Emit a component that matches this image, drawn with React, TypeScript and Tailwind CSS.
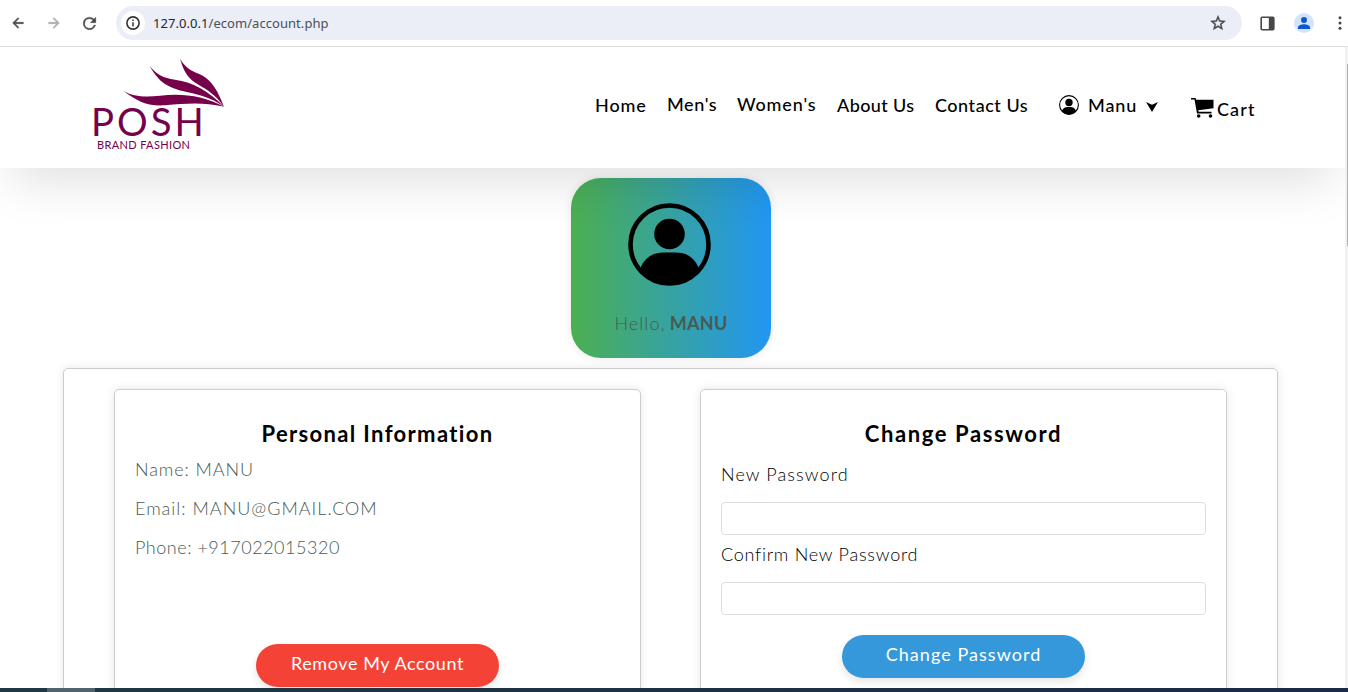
const navItems = [
  { label: "Home", box: "w-[72px] tracking-[0.9px] pt-px" },
  { label: "Men's", box: "w-[70px] tracking-[0.6px]" },
  { label: "Women's", box: "w-[100px] tracking-[0.85px]" },
  { label: "About Us", box: "w-[98px] tracking-[0.4px] pt-px" },
  { label: "Contact Us", box: "w-[124px] tracking-[0.53px] pt-px" },
];

const details = [
  { text: "Name: MANU", spacing: "tracking-[0.9px]" },
  { text: "Email: MANU@GMAIL.COM", spacing: "tracking-[1px]" },
  { text: "Phone: +917022015320", spacing: "tracking-[0.52px]" },
];

function UserIcon({ className }: { className: string }) {
  return (
    <svg viewBox="0 0 83 83" className={className}>
      <circle cx="41.5" cy="41.5" r="39" fill="none" stroke="#000" strokeWidth="4.6" />
      <circle cx="41.5" cy="31" r="15.3" />
      <path d="M12 66C17 53 27 49.500 35 49.500h13C57 49.500 66 53 71 66A38 38 0 0 1 12 66Z" />
    </svg>
  );
}

function BrowserBar() {
  return (
    <div className="flex h-[47px] shrink-0 items-center border-b border-[#dedede] bg-white text-[#474747]">
      <svg viewBox="0 0 24 24" className="ml-[10px] h-4 w-4 fill-current stroke-current stroke-[0.8]">
        <path d="M20 11H7.800l5.600-5.600L12 4l-8 8 8 8 1.400-1.400L7.800 13H20z" />
      </svg>
      <svg viewBox="0 0 24 24" className="ml-5 h-4 w-4 fill-[#aaa] stroke-[#aaa] stroke-[0.8]">
        <path d="m12 4-1.400 1.400L16.200 11H4v2h12.200l-5.600 5.600L12 20l8-8z" />
      </svg>
      <svg viewBox="0 0 24 24" className="ml-[18px] h-[19px] w-[19px] fill-current stroke-current stroke-[0.4]">
        <path d="M17.650 6.350A7.960 7.960 0 0 0 12 4a8 8 0 1 0 7.730 10h-2.080A6 6 0 1 1 12 6c1.660 0 3.140.69 4.220 1.780L13 11h7V4z" />
      </svg>
      <div className="ml-[17px] flex h-[34px] w-[1126px] items-center rounded-full bg-[#ebeef7] pl-[5px] pr-[15px]">
        <span className="flex h-6 w-6 items-center justify-center rounded-full bg-white">
          <svg viewBox="0 0 14 14" className="h-[14px] w-[14px]">
            <circle cx="7" cy="7" r="6.100" fill="none" stroke="#333" strokeWidth="1.600" />
            <path d="M6.250 6.200h1.500v4.200h-1.500zM6.250 3.600h1.500v1.500h-1.500z" fill="#333" />
          </svg>
        </span>
        <span className="ml-2 flex-1 whitespace-nowrap pt-[2px] font-['Noto_Sans',sans-serif] text-[13px] tracking-[0.05px] text-[#4b4e54]">
          <span className="text-[#24262b]">127.0.0.1</span>/ecom/account.php
        </span>
        <svg viewBox="0 0 24 24" className="h-[18px] w-[18px] fill-current stroke-current stroke-[0.5]">
          <path d="m22 9.240-7.190-.62L12 2 9.190 8.630 2 9.240l5.460 4.730L5.820 21 12 17.270 18.180 21l-1.630-7.030zM12 15.400l-3.760 2.270 1-4.280-3.320-2.880 4.380-.38L12 6.100l1.710 4.040 4.380.38-3.320 2.880 1 4.280z" />
        </svg>
      </div>
      <svg viewBox="0 0 15 15" className="ml-[18px] h-[15px] w-[15px]">
        <rect x="1.200" y="1.200" width="12.600" height="12.600" rx="1" fill="none" stroke="#474747" strokeWidth="1.600" />
        <path d="M8.800 1h5v13h-5z" fill="#474747" />
      </svg>
      <span className="ml-[19px] flex h-5 w-5 items-center justify-center rounded-full bg-[#d3e3fd]">
        <svg viewBox="0 0 12 12" className="h-3 w-3 fill-[#0b57d0]">
          <circle cx="6" cy="3" r="3" />
          <path d="M0 12v-1.800C0 8.200 3.500 7.200 6 7.200s6 1 6 3V12z" />
        </svg>
      </span>
      <svg viewBox="0 0 4 14" className="ml-[24px] h-[14px] w-1 shrink-0 fill-current">
        <circle cx="2" cy="1.700" r="1.500" />
        <circle cx="2" cy="7" r="1.500" />
        <circle cx="2" cy="12.300" r="1.500" />
      </svg>
    </div>
  );
}

function Logo() {
  return (
    <svg viewBox="0 0 480 330" className="ml-20 mt-[3px] h-[110px] w-[160px] shrink-0 fill-[#75014b]">
      <path d="M129 122C160 140 195 142 240 137C310 129 370 138 432 170C370 157 325 160 255 166C195 169 170 150 129 122Z" />
      <path d="M209 48C230 74 250 84 285 89C340 97 385 122 432 170C392 142 360 135 320 126C255 112 235 92 209 48Z" />
      <path d="M300 26C316 54 335 62 356 71C390 86 410 112 432 170C405 133 385 122 352 102C322 84 310 60 300 26Z" />
      <text x="33" y="257" fontSize="115" textLength="338" className="font-['Lato',sans-serif]">POSH</text>
      <text x="51" y="298" fontSize="33" textLength="279" className="font-['Lato',sans-serif]">BRAND FASHION</text>
    </svg>
  );
}

function Header() {
  return (
    <header className="relative z-10 flex h-[121px] shrink-0 bg-white shadow-[0_25px_50px_-12px_rgba(0,0,0,0.125)]">
      <Logo />
      <nav className="ml-[355px] flex pt-[44px] text-[18px] font-medium leading-[26px] whitespace-nowrap">
        {navItems.map((item) => (
          <a key={item.label} className={`shrink-0 ${item.box}`}>{item.label}</a>
        ))}
        <a className="flex w-[132px] shrink-0 pt-px tracking-[0.9px]">
          <UserIcon className="mt-[3px] h-5 w-5" />
          <span className="ml-[9px] w-[58px]">Manu</span>
          <svg viewBox="0 0 12 10" className="mt-[10px] h-[10px] w-3">
            <path d="M0 0 6 2.800 12 0 6 10Z" />
          </svg>
        </a>
        <a className="flex pt-[5px] tracking-[1.1px]">
          <svg viewBox="0 0 23 20" className="mt-[2px] h-5 w-[23px]">
            <path d="M0 0h4.500L5.200 1.800H22.500V10.200L7.300 12.300 7.600 13.700H20.500V15.500H6L3.500 1.600H0Z" />
            <circle cx="7.700" cy="18" r="1.800" />
            <circle cx="19.500" cy="18" r="1.800" />
          </svg>
          <span className="ml-[3px]">Cart</span>
        </a>
      </nav>
    </header>
  );
}

const cardClass = "h-[400px] w-[527px] shrink-0 rounded-[5px] border border-[#ccc] px-5 shadow-[0_0_10px_rgba(0,0,0,0.1)]";
const buttonClass = "mx-auto block h-[43px] w-[243px] rounded-[25px] pb-[4px] text-[18px] text-white shadow-[0_4px_8px_rgba(0,0,0,0.1)]";
const inputClass = "block h-[33px] w-full rounded border border-[#ddd] bg-white px-2 outline-none";

export default function App() {
  return (
    <div className="flex h-[692px] w-[1348px] flex-col overflow-hidden bg-white font-['Lato',sans-serif] text-black">
      <BrowserBar />
      <div className="flex h-[641px] shrink-0">
        <div className="flex w-[1345px] shrink-0 flex-col overflow-hidden">
          <Header />
          <section className="ml-[571px] mt-[10px] flex h-[180px] w-[200px] shrink-0 flex-col items-center rounded-[30px] bg-linear-to-r/srgb from-[#4caf50] to-[#2196f3] pt-[25px] shadow-[0_0_10px_rgba(0,0,0,0.1)]">
            <UserIcon className="mr-[3px] h-[83px] w-[83px]" />
            <p className="mt-[25px] whitespace-nowrap text-[18px] font-light leading-6 tracking-[1.1px] text-[#465b52]">
              Hello, <b className="-ml-[2px] font-bold tracking-[0.3px]">MANU</b>
            </p>
          </section>
          <main className="ml-[63px] mt-[10px] flex h-[450px] w-[1215px] shrink-0 gap-[59px] rounded-[5px] border border-[#ccc] pl-[50px] pt-5 shadow-[0_0_10px_rgba(0,0,0,0.1)]">
            <section className={cardClass}>
              <h2 className="pt-[29px] text-center text-[22px] font-bold leading-[30px] tracking-[1.35px]">Personal Information</h2>
              <div className="mt-[7px] flex flex-col gap-[13px] text-[18px] font-light leading-[26px] text-[#465b52]">
                {details.map((d) => (
                  <p key={d.text} className={d.spacing}>{d.text}</p>
                ))}
              </div>
              <button className={`mt-[84px] bg-[#f44336] tracking-[0.6px] ${buttonClass}`}>Remove My Account</button>
            </section>
            <section className={cardClass}>
              <h2 className="pt-[29px] text-center text-[22px] font-bold leading-[30px] tracking-[1.6px]">Change Password</h2>
              <label className="mt-[12px] block text-[18px] font-light leading-[26px] tracking-[1.1px] text-black">New Password</label>
              <input type="password" className={`mt-[15px] ${inputClass}`} />
              <label className="mt-[6px] block text-[18px] font-light leading-[26px] tracking-[0.75px] text-black">Confirm New Password</label>
              <input type="password" className={`mt-[15px] ${inputClass}`} />
              <button className={`mt-5 bg-[#3498db] tracking-[1.05px] ${buttonClass}`}>Change Password</button>
            </section>
          </main>
        </div>
        <div className="w-[3px] bg-[#f1f1f1] pt-[17px]">
          <div className="ml-[2px] h-[182px] w-px bg-[#b0b0b0]" />
        </div>
      </div>
      <div className="h-1 shrink-0 bg-linear-to-r from-[#1f3843] to-[#1b2a47] pl-[47px]">
        <div className="h-1 w-12 bg-[#50646e]" />
      </div>
    </div>
  );
}
